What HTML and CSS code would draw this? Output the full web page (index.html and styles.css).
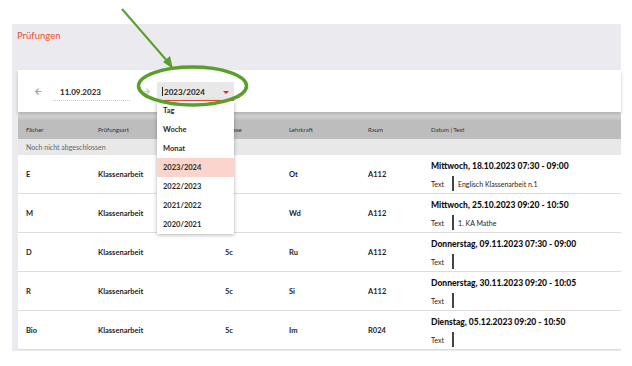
FILE: index.html
```html
<!DOCTYPE html>
<html>
<head>
    <title>Prüfungen</title>
    <link rel="stylesheet" href="styles.css">
</head>
<body>
    <div class="panel">
        <div class="panel-title">Prüfungen</div>
        <div class="panel-body">
            <div class="toolbar">
                <svg class="nav prev" width="9" height="9" viewBox="0 0 24 24">
                    <path d="M20 10.5H8.5l5-5L11 3l-9 9 9 9 2.5-2.5-5-5H20z"/>
                </svg>
                <div class="date-field">11.09.2023</div>
                <svg class="nav next" width="9" height="9" viewBox="0 0 24 24">
                    <path d="M4 10.5h11.5l-5-5L13 3l9 9-9 9-2.5-2.5 5-5H4z"/>
                </svg>
                <div class="select-wrap">
                    <div class="select">
                        <span class="cursor"></span>2023/2024
                        <span class="caret"></span>
                    </div>
                    <ul class="menu">
                        <li>Tag</li>
                        <li>Woche</li>
                        <li>Monat</li>
                        <li class="active">2023/2024</li>
                        <li>2022/2023</li>
                        <li>2021/2022</li>
                        <li>2020/2021</li>
                    </ul>
                </div>
            </div>

            <div class="exams">
                <div class="row head">
                    <div>Fächer</div>
                    <div>Prüfungsart</div>
                    <div>Klasse</div>
                    <div>Lehrkraft</div>
                    <div>Raum</div>
                    <div>Datum | Text</div>
                </div>
                <div class="group">Noch nicht abgeschlossen</div>

                <div class="row">
                    <div>E</div>
                    <div>Klassenarbeit</div>
                    <div>5c</div>
                    <div>Ot</div>
                    <div>A112</div>
                    <div class="when">
                        <div class="date">Mittwoch, 18.10.2023 07:30 - 09:00</div>
                        <div class="note"><span class="label">Text</span><span class="bar"></span>Englisch Klassenarbeit n.1</div>
                    </div>
                </div>
                <div class="row">
                    <div>M</div>
                    <div>Klassenarbeit</div>
                    <div>5c</div>
                    <div>Wd</div>
                    <div>A112</div>
                    <div class="when">
                        <div class="date">Mittwoch, 25.10.2023 09:20 - 10:50</div>
                        <div class="note"><span class="label">Text</span><span class="bar"></span>1. KA Mathe</div>
                    </div>
                </div>
                <div class="row">
                    <div>D</div>
                    <div>Klassenarbeit</div>
                    <div>5c</div>
                    <div>Ru</div>
                    <div>A112</div>
                    <div class="when">
                        <div class="date">Donnerstag, 09.11.2023 07:30 - 09:00</div>
                        <div class="note"><span class="label">Text</span><span class="bar"></span></div>
                    </div>
                </div>
                <div class="row">
                    <div>R</div>
                    <div>Klassenarbeit</div>
                    <div>5c</div>
                    <div>Si</div>
                    <div>A112</div>
                    <div class="when">
                        <div class="date">Donnerstag, 30.11.2023 09:20 - 10:05</div>
                        <div class="note"><span class="label">Text</span><span class="bar"></span></div>
                    </div>
                </div>
                <div class="row">
                    <div>Bio</div>
                    <div>Klassenarbeit</div>
                    <div>5c</div>
                    <div>Im</div>
                    <div>R024</div>
                    <div class="when">
                        <div class="date">Dienstag, 05.12.2023 09:20 - 10:50</div>
                        <div class="note"><span class="label">Text</span><span class="bar"></span></div>
                    </div>
                </div>
            </div>
        </div>
    </div>

    <!-- Hinweis-Pfeil und Markierung -->
    <svg class="marker" width="632" height="366" viewBox="0 0 632 366">
        <line x1="122" y1="9" x2="168" y2="62" stroke="#5a9e2c" stroke-width="2"/>
        <polygon points="173,69 163,62 170,56" fill="#5a9e2c"/>
        <ellipse cx="192.5" cy="86" rx="54" ry="19" fill="none" stroke="#5a9e2c" stroke-width="3.5"/>
    </svg>
</body>
</html>
```

FILE: styles.css
```css
* {
    box-sizing: border-box;
}

body {
    margin: 0;
    background-color: #ffffff;
    font-family: 'Lato', 'Open Sans', sans-serif;
    color: #1e1e1e;
    position: relative;
    width: 632px;
    height: 366px;
    overflow: hidden;
}

.panel {
    margin: 24px 0 0 12px;
    width: 609px;
    background-color: #ebebef;
    padding-bottom: 1px;
}

.panel-title {
    height: 46px;
    padding: 6px 0 0 5px;
    color: #f04f2a;
    font-size: 9.5px;
}

.panel-body {
    padding-left: 6px;
}

/* Werkzeugleiste */
.toolbar {
    height: 42px;
    background-color: #ffffff;
    display: flex;
    align-items: center;
    box-shadow: 0 2px 3px rgba(0, 0, 0, 0.22);
    position: relative;
    z-index: 2;
}

.nav {
    fill: #a6a6a6;
    margin-top: 1px;
}

.prev {
    margin-left: 16px;
}

.next {
    fill: #cccccc;
    margin-left: 12px;
}

.date-field {
    margin-left: 10px;
    width: 77px;
    height: 19px;
    padding: 5px 0 0 7px;
    font-size: 8px;
    font-weight: bold;
    border-bottom: 1px dotted #c8c8c8;
}

.select-wrap {
    margin-left: 6px;
    position: relative;
}

.select {
    width: 77px;
    height: 20px;
    background-color: #e8e8e8;
    border-bottom: 2px solid #f04f2a;
    font-size: 8px;
    font-weight: bold;
    padding: 5px 0 0 5px;
    display: flex;
    align-items: flex-start;
    margin-top: 1px;
}

.cursor {
    width: 1px;
    height: 9px;
    background-color: #222;
    margin-right: 1px;
}

.caret {
    margin: 4px 5px 0 auto;
    border-left: 3px solid transparent;
    border-right: 3px solid transparent;
    border-top: 3px solid #e8231c;
}

.menu {
    position: absolute;
    left: 0;
    top: 20px;
    width: 77px;
    margin: 0;
    padding: 0;
    list-style: none;
    background-color: #ffffff;
    box-shadow: 0 1px 4px rgba(0, 0, 0, 0.3);
    z-index: 5;
}

.menu li {
    height: 19px;
    line-height: 19px;
    padding-left: 6px;
    font-size: 7.5px;
    font-weight: bold;
    color: #2a2a2a;
}

.menu .active {
    background-color: #fdd4cb;
}

/* Tabelle */
.exams {
    background-color: #ffffff;
    padding-top: 8px;
    background-image: linear-gradient(#e2e2e2, #c2c2c2 8px, #ffffff 8px);
}

.row {
    display: grid;
    grid-template-columns: 72px 127px 64px 79px 63px 1fr;
    height: 39px;
    align-items: center;
    border-bottom: 1px solid #dcdcdc;
    font-size: 7.5px;
    font-weight: bold;
}

.row > div {
    padding-left: 8px;
}

.row.head {
    height: 19px;
    background-color: #bdbdbd;
    border-bottom: none;
    font-size: 6px;
    font-weight: normal;
    color: #333;
}

.group {
    height: 16px;
    line-height: 16px;
    background-color: #e8e8e8;
    padding-left: 8px;
    font-size: 7px;
    color: #666;
}

.when {
    align-self: stretch;
    padding-top: 6px;
}

.date {
    font-size: 8.5px;
    font-weight: 900;
    color: #111;
}

.note {
    display: flex;
    align-items: center;
    margin-top: 5px;
    font-size: 7px;
    font-weight: normal;
}

.label {
    width: 21px;
}

.bar {
    width: 2px;
    height: 15px;
    background-color: #444;
    margin-right: 4px;
}

.marker {
    position: absolute;
    left: 0;
    top: 0;
    pointer-events: none;
    z-index: 10;
}
```
